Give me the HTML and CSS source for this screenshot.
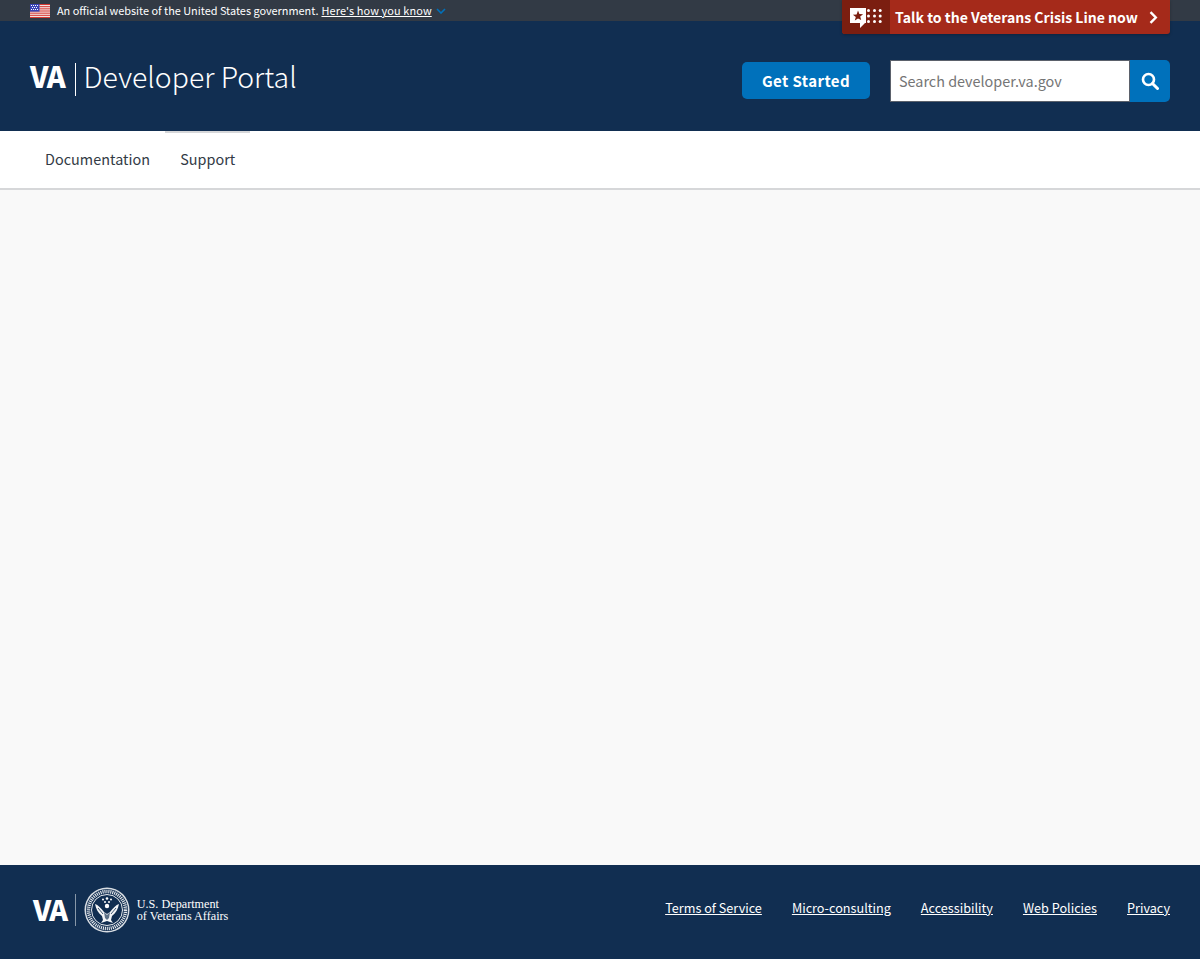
FILE: index.html
```html
<!DOCTYPE html>
<html lang="en">
<head>
<meta charset="utf-8">
<title>VA Developer Portal</title>
<link rel="stylesheet" href="styles.css">
</head>
<body>
<div class="page">
  <header class="site-header">
    <div class="gov-banner">
      <svg class="flag" viewBox="0 0 20 14" width="20" height="14" aria-hidden="true">
        <rect width="20" height="14" fill="#f4f4f4"/>
        <g fill="#d83933">
          <rect y="0" width="20" height="1.1"/><rect y="2.15" width="20" height="1.1"/><rect y="4.3" width="20" height="1.1"/><rect y="6.45" width="20" height="1.1"/><rect y="8.6" width="20" height="1.1"/><rect y="10.75" width="20" height="1.1"/><rect y="12.9" width="20" height="1.1"/>
        </g>
        <rect width="9.5" height="7.6" fill="#3a44b5"/>
        <g fill="#fff">
          <rect x="1" y="1" width="1" height="1"/><rect x="3" y="1" width="1" height="1"/><rect x="5" y="1" width="1" height="1"/><rect x="7" y="1" width="1" height="1"/>
          <rect x="2" y="3" width="1" height="1"/><rect x="4" y="3" width="1" height="1"/><rect x="6" y="3" width="1" height="1"/>
          <rect x="1" y="5" width="1" height="1"/><rect x="3" y="5" width="1" height="1"/><rect x="5" y="5" width="1" height="1"/><rect x="7" y="5" width="1" height="1"/>
        </g>
      </svg>
      <span class="gov-text">An official website of the United States government.</span>
      <a class="gov-link" href="#">Here's how you know</a>
      <svg class="gov-chevron" viewBox="0 0 10 6" width="10" height="6" aria-hidden="true"><path d="M1 1l4 4 4-4" fill="none" stroke="#0071bb" stroke-width="1.6"/></svg>
    </div>
    <a class="crisis" href="#">
      <span class="crisis-icon">
        <svg viewBox="0 0 32 20" width="32" height="20" aria-hidden="true">
          <path d="M0 0h16v15h-1l-5 5v-5H0z" fill="#fff"/>
          <path d="M8 2.500l1.400 3.500 3.700.2-2.900 2.300 1 3.600L8 10.500l-3.200 2.100 1-3.600-2.900-2.300 3.700-.2z" fill="#7b1e10"/>
          <g fill="#fff">
            <circle cx="18.500" cy="2.500" r="1.500"/><circle cx="24.500" cy="2.500" r="1.500"/><circle cx="30.200" cy="2.500" r="1.500"/>
            <circle cx="18.500" cy="8" r="1.500"/><circle cx="24.500" cy="8" r="1.500"/><circle cx="30.200" cy="8" r="1.500"/>
            <circle cx="18.500" cy="13.500" r="1.500"/><circle cx="24.500" cy="13.500" r="1.500"/><circle cx="30.200" cy="13.500" r="1.500"/>
          </g>
        </svg>
      </span>
      <span class="crisis-text">Talk to the Veterans Crisis Line now</span>
      <svg class="crisis-chevron" viewBox="0 0 9 13" width="9" height="13" aria-hidden="true"><path d="M1.500 1.200L6.800 6.500 1.500 11.800" fill="none" stroke="#fff" stroke-width="2.400"/></svg>
    </a>
    <div class="masthead">
      <a class="brand" href="#"><span class="brand-va">VA</span><span class="brand-rule"></span><span class="brand-name">Developer Portal</span></a>
      <div class="masthead-actions">
        <a class="get-started" href="#">Get Started</a>
        <form class="search">
          <input class="search-input" type="text" placeholder="Search developer.va.gov">
          <button class="search-button" type="button" aria-label="Search">
            <svg viewBox="0 0 18 18" width="18" height="18" aria-hidden="true"><circle cx="7.500" cy="7.500" r="5.500" fill="none" stroke="#fff" stroke-width="2.600"/><path d="M11.500 11.500L16.500 16.500" stroke="#fff" stroke-width="3" stroke-linecap="round"/></svg>
          </button>
        </form>
      </div>
    </div>
    <nav class="main-nav">
      <a class="nav-item" href="#">Documentation</a>
      <a class="nav-item nav-item-active" href="#">Support</a>
    </nav>
  </header>
  <main class="content"></main>
  <footer class="site-footer">
    <a class="footer-logo" href="#">
      <span class="footer-va">VA</span>
      <span class="footer-rule"></span>
      <svg class="seal" viewBox="0 0 46 46" width="46" height="46" aria-hidden="true">
        <circle cx="23" cy="23" r="22.500" fill="#d8dde3"/>
        <circle cx="23" cy="23" r="21" fill="#112e51"/>
        <circle cx="23" cy="23" r="18.500" fill="none" stroke="#e6e9ed" stroke-width="3.500" stroke-dasharray="1.100 .9"/>
        <circle cx="23" cy="23" r="15.500" fill="#112e51" stroke="#fff" stroke-width=".9"/>
        <path d="M11 17c3 1 6 4 9 8l3 2 3-2c3-4 6-7 9-8-1 5-3 9-7 12l-1 4 2 3-6-2-6 2 2-3-1-4c-4-3-6-7-7-12z" fill="#f2f4f6"/>
        <path d="M20 25l3 3 3-3-1 6-2 2-2-2z" fill="#5c7188"/>
        <path d="M14 21l5 6M32 21l-5 6" stroke="#112e51" stroke-width=".8"/>
        <g fill="#fff"><circle cx="23" cy="11.500" r="1.300"/><circle cx="19" cy="12.500" r="1"/><circle cx="27" cy="12.500" r="1"/><circle cx="21" cy="15" r="1"/><circle cx="25" cy="15" r="1"/><circle cx="23" cy="19" r="2.200"/></g>
      </svg>
      <span class="footer-dept"><span>U.S. Department</span><span>of Veterans Affairs</span></span>
    </a>
    <ul class="footer-links">
      <li><a href="#">Terms of Service</a></li>
      <li><a href="#">Micro-consulting</a></li>
      <li><a href="#">Accessibility</a></li>
      <li><a href="#">Web Policies</a></li>
      <li><a href="#">Privacy</a></li>
    </ul>
  </footer>
</div>
</body>
</html>
```
FILE: styles.css
```css
* { box-sizing: border-box; }
html, body { margin: 0; padding: 0; }
body {
  font-family: "Noto Sans CJK SC", "Noto Sans", sans-serif;
  color: #323a45;
  background: #f9f9f9;
}
a { color: inherit; }
.page { min-height: 959px; display: flex; flex-direction: column; }
.site-header { position: relative; }

.gov-banner {
  height: 21px;
  background: #323a45;
  color: #fff;
  display: flex;
  align-items: center;
  padding-left: 30px;
  font-size: 10.9px;
  line-height: 21px;
}
.flag { flex: none; margin-right: 7px; }
.gov-link { margin-left: 3px; letter-spacing: .12px; }
.gov-chevron { margin-left: 4px; margin-top: 1px; }

.crisis {
  position: absolute;
  top: 0;
  right: 30px;
  width: 328px;
  height: 34px;
  display: flex;
  align-items: center;
  background: #a52a1a;
  color: #fff;
  text-decoration: none;
  border-radius: 0 0 3px 3px;
  font-weight: 700;
  font-size: 14.050px;
  line-height: 34px;
  white-space: nowrap;
  box-shadow: 0 1px 3px rgba(0,0,0,.25);
}
.crisis-icon {
  flex: none;
  width: 48px;
  height: 34px;
  background: #7b1e10;
  padding: 8px 0 0 8px;
  border-radius: 0 0 0 3px;
  margin-right: 5px;
}
.crisis-icon svg { display: block; }
.crisis-chevron { flex: none; margin-left: 11px; }

.masthead {
  height: 110px;
  background: #112e51;
  display: flex;
  align-items: center;
  justify-content: space-between;
  padding: 0 30px;
}
.brand {
  display: flex;
  align-items: center;
  color: #fff;
  text-decoration: none;
  line-height: 36px;
}
.brand-va {
  font-size: 28.800px;
  font-weight: 900;
  letter-spacing: -1.200px;
}
.brand-rule {
  width: 1px;
  height: 33px;
  background: #fff;
  margin: 7px 8px 0 10px;
}
.brand-name {
  font-size: 28.400px;
  font-weight: 300;
}
.masthead-actions { display: flex; align-items: center; gap: 20px; margin-top: 9px; }
.get-started {
  width: 128px;
  height: 37px;
  background: #0071bb;
  color: #fff;
  text-decoration: none;
  border-radius: 5px;
  font-weight: 700;
  font-size: 15px;
  letter-spacing: .4px;
  line-height: 37px;
  text-align: center;
}
.search { display: flex; margin: 0; }
.search-input {
  width: 240px;
  height: 42px;
  margin: 0;
  border: 1px solid #5b616b;
  border-radius: 0;
  padding: 0 8px;
  font: 14.400px/40px "Noto Sans CJK SC", "Noto Sans", sans-serif;
  background: #fff;
  color: #212121;
}
.search-input::placeholder { color: #757575; opacity: 1; }
.search-button {
  width: 40px;
  height: 42px;
  padding: 0;
  border: 0;
  background: #0071bb;
  border-radius: 0 5px 5px 0;
  display: flex;
  align-items: center;
  justify-content: center;
}

.main-nav {
  height: 59px;
  background: #fff;
  border-bottom: 2px solid #d6d7d9;
  padding-left: 30px;
  display: flex;
}
.nav-item {
  padding: 0 15px;
  font-size: 14.400px;
  letter-spacing: .04px;
  line-height: 52px;
  text-decoration: none;
  border-top: 2px solid transparent;
  color: #323a45;
  height: 57px;
}
.nav-item-active { border-top-color: #d6d7d9; }

.content { flex: 1; background: #f9f9f9; }

.site-footer {
  height: 94px;
  background: #112e51;
  color: #fff;
  display: flex;
  align-items: center;
  justify-content: space-between;
  padding: 0 30px;
}
.footer-logo {
  display: flex;
  align-items: center;
  color: #fff;
  text-decoration: none;
  margin-left: 3px;
  margin-bottom: 4px;
}
.footer-va { font-size: 28.500px; font-weight: 900; letter-spacing: -1.400px; line-height: 32px; margin-top: -3px; }
.footer-rule { width: 1px; height: 32px; background: #8797a8; margin: 0 8px 0 8px; }
.footer-dept {
  display: flex;
  flex-direction: column;
  margin-left: 7px;
  font-family: "Liberation Serif", serif;
  font-size: 12.200px;
  line-height: 12px;
}
.footer-links {
  list-style: none;
  margin: 0 0 8px;
  padding: 0;
  display: flex;
  gap: 30px;
  font-size: 12.670px;
  line-height: 20px;
}
```
